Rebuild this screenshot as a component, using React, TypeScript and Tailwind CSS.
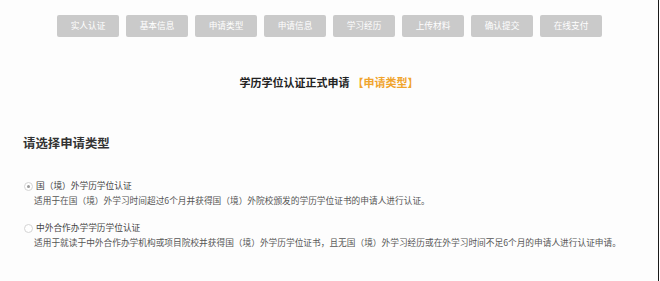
const tabs = ['实人认证', '基本信息', '申请类型', '申请信息', '学习经历', '上传材料', '确认提交', '在线支付']

const options = [
  {
    title: '国（境）外学历学位认证',
    desc: '适用于在国（境）外学习时间超过6个月并获得国（境）外院校颁发的学历学位证书的申请人进行认证。',
    checked: true,
  },
  {
    title: '中外合作办学学历学位认证',
    desc: '适用于就读于中外合作办学机构或项目院校并获得国（境）外学历学位证书，且无国（境）外学习经历或在外学习时间不足6个月的申请人进行认证申请。',
    checked: false,
  },
]

function Radio({ checked }: { checked: boolean }) {
  return (
    <span className="flex h-[9px] w-[9px] shrink-0 items-center justify-center rounded-full border border-[#d4d4d4] bg-white">
      {checked && <span className="h-[3px] w-[3px] rounded-full bg-[#9a9a9a]" />}
    </span>
  )
}

export default function App() {
  return (
    <div
      className="h-[281px] w-[660px] overflow-hidden bg-white"
      style={{ fontFamily: '"Noto Sans CJK SC", "Noto Sans", sans-serif' }}
    >
      <div className="h-full w-[659px] border-r border-[#1a1a1a] bg-[#fdfdfd]">
        <div className="ml-[57px] flex gap-[7px] pt-[15px]">
          {tabs.map((t) => (
            <div
              key={t}
              className="flex h-[22px] w-[62px] items-center justify-center rounded-[2px] bg-[#cacaca] text-[8.7px] text-white"
            >
              {t}
            </div>
          ))}
        </div>

        <div className="mt-[37px] flex justify-center text-[11px] font-bold leading-[16px] text-[#222]">
          <span>学历学位认证正式申请</span>
          <span className="ml-[3px] text-[#f0a42c]">【申请类型】</span>
        </div>

        <div className="mt-[44px] pl-[23px] text-[12.4px] font-semibold leading-[18px] text-[#333]">
          请选择申请类型
        </div>

        <div className="mt-[27px] flex flex-col gap-[13px] pl-[24px]">
          {options.map((o) => (
            <div key={o.title} className="flex flex-col gap-[1px]">
              <div className="flex items-center gap-[3px]">
                <Radio checked={o.checked} />
                <span className="text-[8.7px] leading-[14px] text-[#444]">{o.title}</span>
              </div>
              <div className="pl-[10px] text-[8.7px] leading-[14px] text-[#555]">{o.desc}</div>
            </div>
          ))}
        </div>
      </div>
    </div>
  )
}
